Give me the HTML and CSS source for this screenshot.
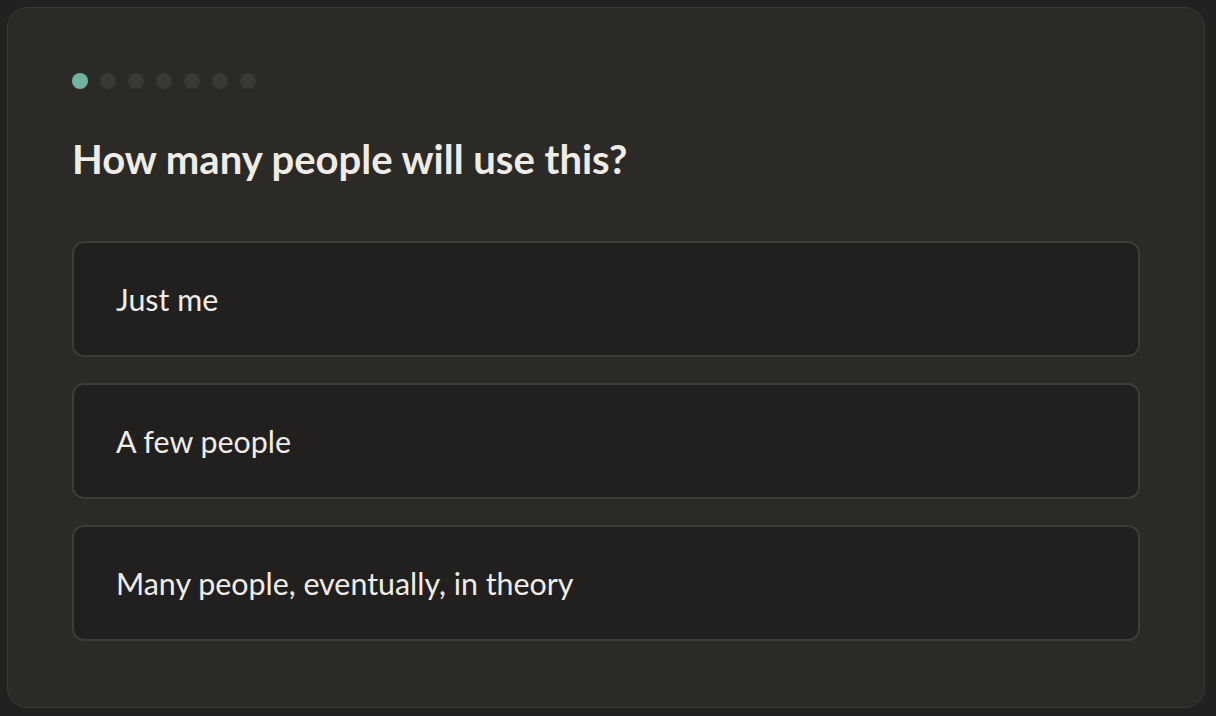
FILE: index.html
```html
<!DOCTYPE html>
<html lang="en">
<head>
    <meta charset="UTF-8">
    <meta name="viewport" content="width=device-width, initial-scale=1.0">
    <title>Onboarding</title>
    <link rel="stylesheet" href="styles.css">
</head>
<body>
    <div class="card">
        <div class="steps">
            <span class="dot active"></span>
            <span class="dot"></span>
            <span class="dot"></span>
            <span class="dot"></span>
            <span class="dot"></span>
            <span class="dot"></span>
            <span class="dot"></span>
        </div>

        <h1 class="question">How many people will use this?</h1>

        <div class="options">
            <button class="option">Just me</button>
            <button class="option">A few people</button>
            <button class="option">Many people, eventually, in theory</button>
        </div>
    </div>
</body>
</html>
```

FILE: styles.css
```css
/* Global */
body {
    margin: 0;
    padding: 7px;
    background-color: #222120;
    font-family: 'Lato', 'Noto Sans', sans-serif;
    color: #f0ede8;
}

.card {
    box-sizing: border-box;
    width: 1198px;
    height: 701px;
    padding: 65px 64px 64px;
    background-color: #2b2a26;
    border: 1px solid #3a3935;
    border-radius: 20px;
    display: flex;
    flex-direction: column;
}

/* Progress dots */
.steps {
    display: flex;
    gap: 12px;
}

.dot {
    width: 16px;
    height: 16px;
    border-radius: 50%;
    background-color: #393834;
}

.dot.active {
    background-color: #6fb3a0;
}

.question {
    margin: 46px 0 58px;
    font-size: 40px;
    line-height: 48px;
    font-weight: 700;
    color: #efece6;
}

/* Answer list */
.options {
    display: flex;
    flex-direction: column;
    gap: 26px;
}

.option {
    box-sizing: border-box;
    height: 116px;
    display: flex;
    align-items: center;
    padding: 0 42px;
    background-color: #21201e;
    border: 2px solid #3d3c38;
    border-radius: 12px;
    font-family: inherit;
    font-size: 30.4px;
    color: #f0ede8;
    text-align: left;
    cursor: pointer;
}

.option:hover {
    border-color: #4a4944;
}
```
